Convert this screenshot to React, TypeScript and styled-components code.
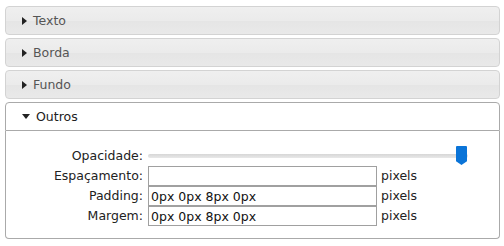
import styled, { createGlobalStyle } from "styled-components";

const GlobalStyle = createGlobalStyle`
  body {
    margin: 0;
    background: #ffffff;
    font-family: "DejaVu Sans", Verdana, sans-serif;
  }
`;

const Accordion = styled.div`
  display: flex;
  flex-direction: column;
  gap: 3px;
  padding: 6px 4px 0 5px;
`;

const Header = styled.div<{ active?: boolean }>`
  display: flex;
  align-items: center;
  gap: 6px;
  height: 27px;
  padding-left: 16px;
  font-size: 12.5px;
  border: 1px solid ${(p) => (p.active ? "#aaaaaa" : "#d3d3d3")};
  border-radius: ${(p) => (p.active ? "4px 4px 0 0" : "4px")};
  color: ${(p) => (p.active ? "#212121" : "#555555")};
  background: ${(p) =>
    p.active
      ? "#ffffff"
      : "linear-gradient(#efefef 0%, #ebebeb 50%, #e5e5e5 52%, #e9e9e9 100%)"};
  cursor: pointer;
`;

const Arrow = styled.span<{ open?: boolean }>`
  width: 0;
  height: 0;
  border-style: solid;
  border-color: transparent;
  ${(p) =>
    p.open
      ? `border-width: 5px 4px 0 4px; border-top-color: #222;`
      : `border-width: 4px 0 4px 5px; border-left-color: #222;`}
`;

const Content = styled.div`
  border: 1px solid #aaaaaa;
  border-top: 0;
  border-radius: 0 0 4px 4px;
  margin-top: -3px;
  height: 108px;
  padding: 14px 0 0 0;
  box-sizing: border-box;
  color: #222222;
  font-size: 12.5px;
`;

const Form = styled.div`
  display: grid;
  grid-template-columns: 137px 229px auto;
  column-gap: 5px;
  row-gap: 0;
  align-items: center;
`;

const Label = styled.span`
  text-align: right;
  line-height: 20px;
`;

const Unit = styled.span`
  margin-left: -1px;
  line-height: 20px;
`;

const SliderWrap = styled.div`
  grid-column: 2 / 4;
  position: relative;
  width: 320px;
  height: 21px;
  display: flex;
  align-items: center;
`;

const Track = styled.div`
  width: 100%;
  height: 4px;
  border-radius: 2px;
  background: linear-gradient(#d6d6d6, #e8e8e8);
`;

const Handle = styled.div`
  position: absolute;
  right: 1px;
  top: 1px;
  width: 11px;
  height: 19px;
  background: #0a74d8;
  clip-path: polygon(0 0, 100% 0, 100% 80%, 50% 100%, 0 80%);
  border-radius: 1px;
`;

const Input = styled.input`
  box-sizing: border-box;
  width: 229px;
  height: 20px;
  margin: 0;
  padding: 0 2px;
  border: 1px solid #a0a0a0;
  font-family: "DejaVu Sans", Verdana, sans-serif;
  font-size: 12.5px;
  color: #111;
  outline: none;
`;

const sections = ["Texto", "Borda", "Fundo"];

export default function App() {
  return (
    <>
      <GlobalStyle />
      <Accordion>
        {sections.map((s) => (
          <Header key={s}>
            <Arrow />
            {s}
          </Header>
        ))}
        <Header active>
          <Arrow open />
          Outros
        </Header>
        <Content>
          <Form>
            <Label>Opacidade:</Label>
            <SliderWrap>
              <Track />
              <Handle />
            </SliderWrap>
            <Label>Espaçamento:</Label>
            <Input defaultValue="" />
            <Unit>pixels</Unit>
            <Label>Padding:</Label>
            <Input defaultValue="0px 0px 8px 0px" />
            <Unit>pixels</Unit>
            <Label>Margem:</Label>
            <Input defaultValue="0px 0px 8px 0px" />
            <Unit>pixels</Unit>
          </Form>
        </Content>
      </Accordion>
    </>
  );
}
